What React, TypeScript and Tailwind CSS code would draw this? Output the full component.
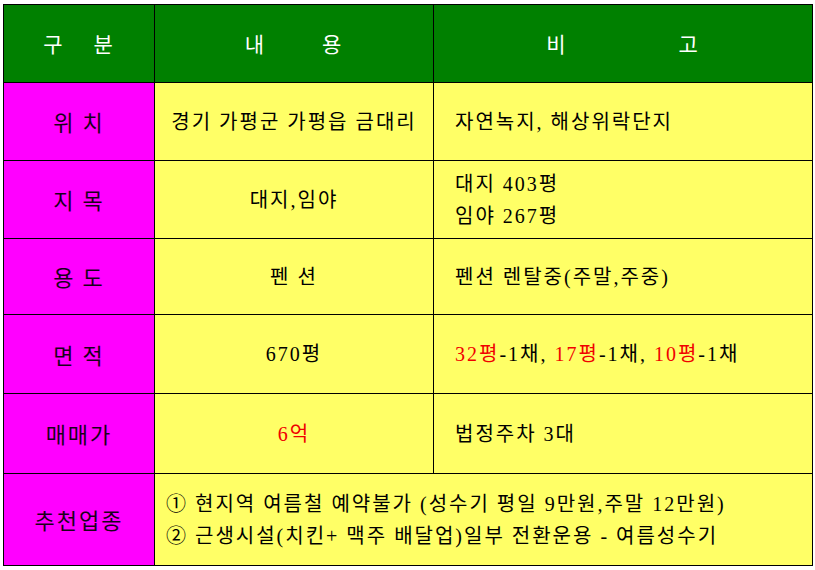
const sans = "font-['Noto_Sans_CJK_KR',sans-serif]";
const serif = "font-['Liberation_Serif','Noto_Sans_CJK_KR',serif]";

function Head({ words, gap }: { words: string[]; gap: string }) {
  return (
    <th className="bg-[#008000] border border-black font-normal">
      <div className={`flex justify-center ${gap} text-white text-[21px] ${sans}`}>
        {words.map((w) => (
          <span key={w}>{w}</span>
        ))}
      </div>
    </th>
  );
}

function Label({ text }: { text: string }) {
  return (
    <td
      className={`bg-[#ff00ff] border border-black text-center text-[22px] tracking-[2px] text-[#1a001a] ${sans} whitespace-pre`}
    >
      {text}
    </td>
  );
}

const red = "text-[#f00000]";
const cell = "bg-[#ffff66] border border-black";

export default function App() {
  return (
    <div className="bg-white w-[815px] h-[570px] pl-[3px] pt-[4px]">
      <table className="table-fixed border-collapse border border-black w-[809px]">
        <colgroup>
          <col className="w-[151px]" />
          <col className="w-[279px]" />
          <col className="w-[379px]" />
        </colgroup>
        <tbody className={`text-[20px] tracking-[2px] text-black ${serif}`}>
          <tr className="h-[78px]">
            <Head words={["구", "분"]} gap="gap-[29px]" />
            <Head words={["내", "용"]} gap="gap-[56px]" />
            <Head words={["비", "고"]} gap="gap-[111px]" />
          </tr>
          <tr className="h-[78px]">
            <Label text="위 치" />
            <td className={`${cell} text-center whitespace-pre`}>경기 가평군 가평읍 금대리</td>
            <td className={`${cell} pl-[21px]`}>자연녹지, 해상위락단지</td>
          </tr>
          <tr className="h-[78px]">
            <Label text="지 목" />
            <td className={`${cell} text-center`}>대지,임야</td>
            <td className={`${cell} pl-[21px] leading-[32px]`}>
              <div className="whitespace-pre">대지 403평</div>
              <div>임야 267평</div>
            </td>
          </tr>
          <tr className="h-[76px]">
            <Label text="용 도" />
            <td className={`${cell} text-center whitespace-pre`}>펜 션</td>
            <td className={`${cell} pl-[21px] whitespace-pre`}>펜션 렌탈중(주말,주중)</td>
          </tr>
          <tr className="h-[79px]">
            <Label text="면 적" />
            <td className={`${cell} text-center`}>670평</td>
            <td className={`${cell} pl-[21px]`}>
              <span className={red}>32평</span>-1채, <span className={red}>17평</span>-1채,{" "}
              <span className={red}>10평</span>-1채
            </td>
          </tr>
          <tr className="h-[80px]">
            <Label text="매매가" />
            <td className={`${cell} text-center ${red}`}>6억</td>
            <td className={`${cell} pl-[21px]`}>법정주차 3대</td>
          </tr>
          <tr className="h-[92px]">
            <Label text="추천업종" />
            <td colSpan={2} className={`${cell} pl-[11px] leading-[32px] whitespace-pre`}>
              <div>① 현지역 여름철 예약불가 (성수기 평일 9만원,주말 12만원)</div>
              <div>② 근생시설(치킨+ 맥주 배달업)일부 전환운용 - 여름성수기</div>
            </td>
          </tr>
        </tbody>
      </table>
    </div>
  );
}
